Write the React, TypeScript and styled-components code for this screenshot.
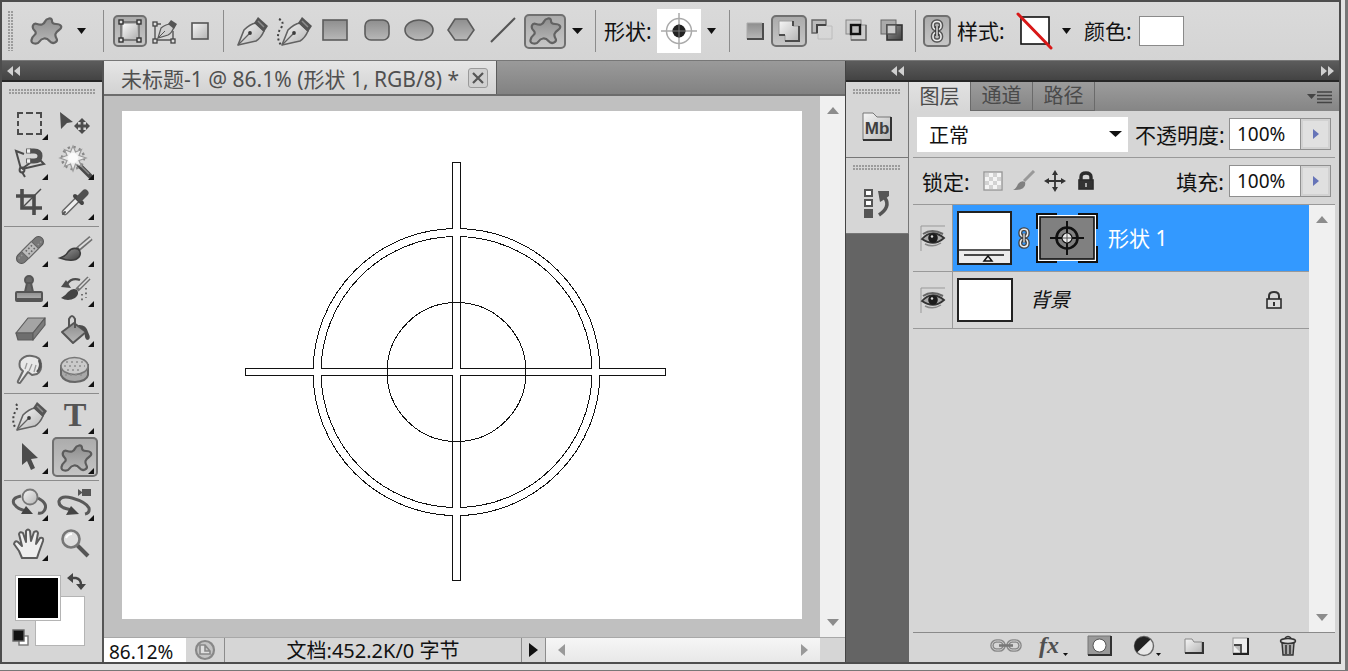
import React from "react";
import styled, { createGlobalStyle, css } from "styled-components";

const SANS = `"Noto Sans", "Noto Sans CJK SC", sans-serif`;
const INK = "#4c4c4c";
const FACE = "#d6d6d6";

const Global = createGlobalStyle`
  *, *::before, *::after { box-sizing: border-box; }
  body { margin: 0; background: ${FACE}; font-family: ${SANS}; color: #111; }
  button, input, select { font: inherit; color: inherit; margin: 0; padding: 0; border: 0; border-radius: 0; background: none; }
  svg { display: block; flex: none; }
  ul { list-style: none; margin: 0; padding: 0; }
`;

/* ---------- window frame ---------- */

const Frame = styled.div`
  display: flex;
  min-height: 100vh;
  border-right: 3px solid #777;
  border-bottom: 1px solid #777;
  background: #e2e2e2;
  padding: 0 4px 6px 0;
`;

const Window = styled.div`
  flex: 1;
  min-width: 0;
  display: flex;
  flex-direction: column;
  border: 2px solid #4d4d4d;
  background: #646464;
`;

const Workspace = styled.div`
  flex: 1;
  display: flex;
  min-height: 0;
`;

const Grip = styled.span<{ $vertical?: boolean }>`
  flex: none;
  background-image: radial-gradient(circle at 1px 1px, #9c9c9c 1px, transparent 1px);
  background-size: 3px 3px;
  ${(p) =>
    p.$vertical
      ? css`width: 6px; height: 40px; margin: 0 14px 0 6px;`
      : css`display: block; height: 6px; margin: 7px 7px 8px;`}
`;

/* ---------- options bar ---------- */

const OptionsBar = styled.header`
  display: flex;
  align-items: center;
  height: 59px;
  background: linear-gradient(#dadada, #d4d4d4);
  border-bottom: 1px solid #777;
  overflow: hidden;
`;

const OptButton = styled.button<{ $w: number; $on?: boolean }>`
  flex: none;
  display: flex;
  align-items: center;
  justify-content: center;
  width: ${(p) => p.$w}px;
  height: ${(p) => (p.$w > 40 && p.$on ? 35 : 32)}px;
  ${(p) =>
    p.$on &&
    css`
      border: 2px solid #707070;
      border-radius: 5px;
      background: linear-gradient(#ababab, #c6c6c6);
    `}
`;

const Divider = styled.span<{ $l: number; $r: number }>`
  flex: none;
  width: 1px;
  height: 42px;
  background: #8c8c8c;
  margin: 0 ${(p) => p.$r}px 0 ${(p) => p.$l}px;
`;

const OptLabel = styled.span<{ $w: number; $inset?: number }>`
  flex: none;
  width: ${(p) => p.$w}px;
  padding-left: ${(p) => p.$inset ?? 0}px;
  font-size: 21px;
  line-height: 28px;
  white-space: nowrap;
`;

const ShapeSwatch = styled.button`
  flex: none;
  width: 44px;
  height: 44px;
  background: #fff;
`;

const ColorWell = styled.button`
  flex: none;
  width: 45px;
  height: 30px;
  background: #fff;
  border: 1px solid #8a8a8a;
`;

/* ---------- tools ---------- */

const DarkHeader = styled.div<{ $end?: boolean }>`
  flex: none;
  display: flex;
  align-items: center;
  justify-content: ${(p) => (p.$end ? "flex-end" : "flex-start")};
  height: 21px;
  padding: 0 5px;
  background: linear-gradient(#5c5c5c, #434343);
  border-bottom: 2px solid #262626;
`;

const ToolPalette = styled.aside`
  flex: none;
  display: flex;
  flex-direction: column;
  width: 102px;
  border-right: 2px solid #555;
  background: ${FACE};
`;

const ToolGroup = styled.div`
  display: grid;
  grid-template-columns: 46px 46px;
  grid-auto-rows: 40px;
  margin: 0 4px;
`;

const ToolRule = styled.hr`
  width: 95px;
  height: 1px;
  border: 0;
  margin: 3px 2px;
  background: #8c8c8c;
`;

const Tool = styled.button<{ $on?: boolean }>`
  width: 46px;
  height: 40px;
  ${(p) => p.$on && css`
    border-radius: 5px;
    box-shadow: inset 0 0 0 2px #707070;
    background: linear-gradient(#ababab, #c6c6c6);
  `}
`;

const Swatches = styled.div`
  position: relative;
  height: 76px;
  margin: 7px 10px 0;
`;

const Swatch = styled.button<{ $x: number; $y: number; $size: number; $color: string }>`
  position: absolute;
  left: ${(p) => p.$x}px;
  top: ${(p) => p.$y}px;
  width: ${(p) => p.$size}px;
  height: ${(p) => p.$size}px;
  background: ${(p) => p.$color};
  border: 2px solid #fff;
  outline: 1px solid #b4b4b4;
`;

const SwatchAction = styled.button<{ $x: number; $y: number }>`
  position: absolute;
  left: ${(p) => p.$x}px;
  top: ${(p) => p.$y}px;
`;

/* ---------- document ---------- */

const Doc = styled.main`
  flex: 1;
  min-width: 0;
  display: flex;
  flex-direction: column;
  background: #c0c0c0;
  border-right: 1px solid #444;
`;

const TabStrip = styled.div`
  flex: none;
  display: flex;
  height: 35px;
  background: linear-gradient(#9a9a9a, #828282);
  border-bottom: 2px solid #6c6c6c;
`;

const DocTab = styled.div`
  display: flex;
  align-items: center;
  gap: 9px;
  padding: 0 8px 0 17px;
  background: linear-gradient(#e6e6e6, #d2d2d2);
  border-right: 1px solid #5c5c5c;
  font-size: 21px;
  color: #505050;
  white-space: nowrap;
`;

const CloseTab = styled.button`
  width: 20px;
  height: 20px;
  border: 1px solid #9a9a9a;
  border-radius: 3px;
  background: #d0d0d0;
  display: grid;
  place-items: center;
`;

const DocBody = styled.div`
  flex: 1;
  display: flex;
`;

const Pasteboard = styled.div`
  flex: 1;
  min-width: 0;
  display: flex;
  padding: 15px 18px 18px 18px;
`;

const Artboard = styled.div`
  flex: 1;
  display: flex;
  align-items: center;
  background: #fff;
  svg { width: 100%; height: 100%; flex: 1; }
`;

const VScroll = styled.div`
  flex: none;
  width: 25px;
  display: flex;
  flex-direction: column;
  justify-content: space-between;
  align-items: center;
  padding: 11px 0;
  background: #f0f0f0;
`;

const StatusBar = styled.footer`
  flex: none;
  display: flex;
  align-items: stretch;
  height: 25px;
  background: ${FACE};
  border-top: 1px solid #a8a8a8;
  font-size: 20px;
  line-height: 25px;
`;

const ZoomField = styled.input`
  width: 82px;
  padding: 3px 0 0 5px;
  background: #fff;
  font-size: 19px;
  line-height: 20px;
`;

const StatusButton = styled.button<{ $w: number }>`
  width: ${(p) => p.$w}px;
  display: grid;
  place-items: center;
  border-right: 1px solid #8c8c8c;
`;

const DocSize = styled.span`
  width: 297px;
  text-align: center;
  border-right: 1px solid #8c8c8c;
  white-space: nowrap;
`;

const HScroll = styled.div`
  flex: 1;
  display: flex;
  justify-content: space-between;
  align-items: center;
  padding: 0 12px;
  background: linear-gradient(#f6f6f6, #e8e8e8);
`;

const Corner = styled.span`
  width: 25px;
`;

/* ---------- docked icons ---------- */

const Dock = styled.aside`
  flex: none;
  display: flex;
  flex-direction: column;
  width: 63px;
`;

const DockCell = styled.div`
  height: 76px;
  background: ${FACE};
  border-bottom: 1px solid #777;
  border-right: 1px solid #777;
`;

const DockButton = styled.button`
  display: grid;
  place-items: center;
  width: 100%;
  height: 47px;
`;

/* ---------- layers panel ---------- */

const Panel = styled.section`
  flex: none;
  display: flex;
  flex-direction: column;
  width: 430px;
  background: ${FACE};
`;

const PanelTabs = styled.div`
  flex: none;
  display: flex;
  height: 29px;
  background: linear-gradient(#9c9c9c, #858585);
`;

const PanelTab = styled.button<{ $on?: boolean }>`
  width: 62px;
  border-right: 1px solid #6a6a6a;
  font-size: 20px;
  line-height: 28px;
  color: #4a4a4a;
  ${(p) => (p.$on ? css`background: linear-gradient(#e2e2e2, #d6d6d6);` : css`border-bottom: 1px solid #6a6a6a;`)}
`;

const PanelMenu = styled.button`
  margin-left: auto;
  padding-right: 6px;
`;

const PanelRow = styled.div<{ $inset?: number }>`
  flex: none;
  display: flex;
  align-items: center;
  height: 47px;
  margin: 0 4px;
  padding: 0 4px 0 ${(p) => p.$inset ?? 4}px;
  border-bottom: 1px solid #999;
  font-size: 21px;
  white-space: nowrap;
`;

const BlendSelect = styled.div`
  display: grid;
  align-items: center;
  width: 211px;
  height: 35px;
  margin-right: 7px;
  background: #fff;
  select {
    grid-area: 1 / 1;
    appearance: none;
    width: 100%;
    height: 35px;
    padding: 3px 0 0 12px;
    font-size: 20px;
  }
  svg { grid-area: 1 / 1; justify-self: end; margin-right: 6px; pointer-events: none; }
`;

const Percent = styled.div`
  display: flex;
  width: 102px;
  height: 32px;
  margin-left: auto;
  border: 1px solid #8f8f8f;
  input {
    width: 70px;
    padding-left: 7px;
    font-size: 19px;
    background: #fff;
  }
  button {
    flex: 1;
    display: grid;
    place-items: center;
    border-left: 1px solid #8f8f8f;
    background: #e0e0e0;
    box-shadow: inset 0 0 0 2px #d2d2d2;
  }
`;

const LockButton = styled.button`
  width: 31px;
  height: 28px;
  display: grid;
  place-items: center;
`;

const LockLabel = styled.span`
  width: 55px;
`;

const FillLabel = styled.label`
  margin-left: auto;
  & + ${Percent} { margin-left: 5px; }
`;

const LayersArea = styled.div`
  flex: 1;
  display: flex;
  margin: 0 4px;
  border-bottom: 1px solid #8a8a8a;
`;

const LayerList = styled.ul`
  flex: 1;
`;

const LayerRow = styled.li<{ $on?: boolean }>`
  display: flex;
  height: ${(p) => (p.$on ? 67 : 57)}px;
  border-bottom: 1px solid #999;
`;

const EyeCell = styled.button`
  width: 40px;
  display: grid;
  place-items: center;
  border-right: 1px solid #999;
  background: ${FACE};
`;

const LayerBody = styled.div<{ $on?: boolean }>`
  flex: 1;
  display: flex;
  align-items: center;
  padding: 0 26px 0 4px;
  background: ${(p) => (p.$on ? "#3399ff" : "transparent")};
`;

const LayerName = styled.span<{ $bg?: boolean }>`
  flex: 1;
  font-size: ${(p) => (p.$bg ? 20 : 21)}px;
  line-height: 28px;
  color: ${(p) => (p.$bg ? "#111" : "#fff")};
  font-style: ${(p) => (p.$bg ? "italic" : "normal")};
  margin-left: ${(p) => (p.$bg ? 17 : 9)}px;
`;

const LayerScroll = styled(VScroll)`
  width: 26px;
`;

const PanelFooter = styled.div`
  flex: none;
  display: flex;
  align-items: flex-start;
  justify-content: flex-end;
  height: 29px;
  padding-right: 28px;
`;

const FootButton = styled.button`
  width: 47px;
  height: 26px;
  display: grid;
  place-items: center;
`;

/* ---------- drawings ---------- */

type Pt = [number, number];

/* Closed curve through the midpoints of a point list */
function smooth(pts: Pt[]) {
  const mid = (a: Pt, b: Pt) => `${(a[0] + b[0]) / 2} ${(a[1] + b[1]) / 2}`;
  const n = pts.length;
  let d = `M${mid(pts[n - 1], pts[0])}`;
  pts.forEach((p, i) => {
    d += `Q${p[0]} ${p[1]} ${mid(p, pts[(i + 1) % n])}`;
  });
  return d + "Z";
}

const BLOB = smooth([
  [17, 3], [23, 2], [23, 8], [31, 8], [33, 12], [27, 16], [26, 20], [29, 25], [23, 28],
  [18, 22], [12, 23], [9, 28], [2, 27], [3, 21], [8, 17], [3, 12], [5, 7], [11, 9], [15, 8],
]);

const Defs = () => (
  <svg width="0" height="0" style={{ position: "absolute" }} aria-hidden="true">
    <defs>
      <linearGradient id="mid" x1="0" y1="0" x2="0" y2="1">
        <stop offset="0" stopColor="#8e8e8e" /><stop offset="1" stopColor="#b8b8b8" />
      </linearGradient>
      <linearGradient id="light" x1="0" y1="0" x2="1" y2="1">
        <stop offset="0" stopColor="#f6f6f6" /><stop offset="1" stopColor="#b4b4b4" />
      </linearGradient>
      <linearGradient id="dark" x1="0" y1="0" x2="1" y2="1">
        <stop offset="0" stopColor="#9a9a9a" /><stop offset="1" stopColor="#404040" />
      </linearGradient>
    </defs>
  </svg>
);

const Down = ({ w = 11, c = "#111" }: { w?: number; c?: string }) => (
  <svg width={w} height="6" viewBox="0 0 11 6" preserveAspectRatio="none"><path d="M0 0H11L5.5 6Z" fill={c} /></svg>
);
const Up = () => <svg width="12" height="7" viewBox="0 0 12 7"><path d="M0 7H12L6 0Z" fill="#8c8c8c" /></svg>;
const DownGrey = () => <svg width="12" height="7" viewBox="0 0 12 7"><path d="M0 0H12L6 7Z" fill="#8c8c8c" /></svg>;
const Left = () => <svg width="7" height="12" viewBox="0 0 7 12"><path d="M7 0V12L0 6Z" fill="#999" /></svg>;
const Right = ({ c = "#999" }: { c?: string }) => (
  <svg width="7" height="12" viewBox="0 0 7 12"><path d="M0 0V12L7 6Z" fill={c} /></svg>
);
const SliderArrow = () => (
  <svg width="6" height="10" viewBox="0 0 6 10"><path d="M0 0V10L6 5Z" fill="#6674b8" /></svg>
);
const Collapse = ({ flip }: { flip?: boolean }) => (
  <svg width="13" height="10" viewBox="0 0 13 10">
    <path d={flip ? "M0 0V10L6 5ZM7 0V10L13 5Z" : "M6 0V10L0 5ZM13 0V10L7 5Z"} fill="#d0d0d0" />
  </svg>
);

const Blob = () => (
  <svg width="34" height="30" viewBox="0 0 34 30"><path d={BLOB} fill="url(#mid)" stroke="#626262" strokeWidth="2.2" /></svg>
);

const PenShape = () => (
  <g strokeLinejoin="round">
    <path d="M2 29L8 14Q14 8 20 7L28 15Q25 22 20 25Z" fill="url(#light)" stroke="#626262" strokeWidth="1.6" />
    <path d="M2 29L13 18" stroke="#626262" strokeWidth="1.2" />
    <circle cx="14" cy="17" r="1.9" fill="#3c3c3c" />
    <path d="M22 1L32 10L28 16L18 7Z" fill="#555" />
    <path d="M22 5L28 11" stroke="#8d8d8d" strokeWidth="1.5" />
  </g>
);
const Pen = () => <svg width="33" height="31" viewBox="0 0 33 31"><PenShape /></svg>;
const FreePen = () => (
  <svg width="37" height="31" viewBox="0 0 37 31">
    <path d="M3 3Q9 6 5 12Q-1 20 5 29" fill="none" stroke="#444" strokeWidth="2" strokeDasharray="2 2.4" />
    <g transform="translate(4 0)"><PenShape /></g>
  </svg>
);

const ShapeLayer = () => (
  <svg width="24" height="24" viewBox="0 0 24 24">
    <path d="M3 3H21V21H3Z" fill="none" stroke="#666" strokeWidth="1.4" />
    <rect x="5" y="5" width="14" height="14" fill="url(#light)" />
    {[[3, 3], [21, 3], [3, 21], [21, 21]].map(([x, y]) => (
      <rect key={`${x}-${y}`} x={x - 2} y={y - 2} width="4" height="4" fill="#ddd" stroke="#333" strokeWidth="1.4" />
    ))}
  </svg>
);
const PathMode = () => (
  <svg width="25" height="25" viewBox="0 0 25 25">
    <path d="M3 6V21H21V12M3 5H9" fill="none" stroke="#555" strokeWidth="1.4" />
    {[[3, 5], [3, 22], [21, 22]].map(([x, y]) => (
      <rect key={`${x}-${y}`} x={x - 2} y={y - 2} width="4" height="4" fill="#ddd" stroke="#444" strokeWidth="1.3" />
    ))}
    <path d="M6 19L9 9Q14 5 19 5L22 8Q20 14 16 16Z" fill="#cfcfcf" stroke="#5a5a5a" strokeWidth="1.2" />
    <path d="M6 19L13 12" stroke="#555" />
    <path d="M19 1L25 5L22 10L16 5Z" fill="#555" />
  </svg>
);
const FillPixels = () => (
  <svg width="19" height="19" viewBox="0 0 19 19"><rect x="1" y="1" width="16" height="16" fill="url(#light)" stroke="#555" strokeWidth="1.6" /></svg>
);

const Prim = ({ kind }: { kind: "rect" | "round" | "ellipse" | "hex" | "line" }) => {
  const s = { fill: "url(#mid)", stroke: "#5c5c5c", strokeWidth: 1.6 };
  return (
    <svg width="30" height="28" viewBox="0 0 30 28">
      {kind === "rect" && <rect x="3" y="3" width="24" height="20" {...s} />}
      {kind === "round" && <rect x="3" y="3" width="24" height="20" rx="6" {...s} />}
      {kind === "ellipse" && <ellipse cx="15" cy="13" rx="14" ry="10" {...s} />}
      {kind === "hex" && <path d="M9 2H21L28 13L21 23H9L2 13Z" {...s} />}
      {kind === "line" && <path d="M3 25L27 1" stroke="#555" strokeWidth="2" />}
    </svg>
  );
};

const MiniTarget = () => (
  <svg width="44" height="44" viewBox="0 0 44 44">
    <circle cx="22" cy="22" r="12.5" fill="none" stroke="#aaa" strokeWidth="1.5" />
    <path d="M22 4V40M4 22H40" stroke="#aaa" strokeWidth="1.5" />
    <circle cx="22" cy="22" r="6.5" fill="#222" />
    <path d="M22 15V29M15 22H29" stroke="#777" />
  </svg>
);

const Combine = ({ kind }: { kind: "new" | "add" | "sub" | "int" | "xor" }) => (
  <svg width="26" height="24" viewBox="0 0 26 24">
    {kind === "new" && (
      <g><rect x="4" y="4" width="16" height="16" fill="url(#mid)" /><path d="M4 20V4H19" fill="none" stroke="#aaa" /><path d="M20 4V20H4" fill="none" stroke="#4c4c4c" strokeWidth="2" /></g>
    )}
    {kind === "add" && (
      <g><path d="M3 2H17V7H23V22H9V16H3Z" fill="url(#light)" stroke="#9a9a9a" /><path d="M17 2V7M23 7V22H9M3 16H9" fill="none" stroke="#4c4c4c" strokeWidth="2" /></g>
    )}
    {kind === "sub" && (
      <g><path d="M3 1H17V6H8V14H3Z" fill="#bbb" stroke="#666" strokeWidth="1.4" /><path d="M17 6H8V14" fill="none" stroke="#444" strokeWidth="2" /><path d="M18 7H23V20H9V15" fill="none" stroke="#bcbcbc" /></g>
    )}
    {kind === "int" && (
      <g><rect x="2" y="1" width="15" height="14" fill="#ccc" stroke="#888" /><rect x="7" y="6" width="15" height="15" fill="#ccc" stroke="#888" /><path d="M22 6V21H7" fill="none" stroke="#666" strokeWidth="1.4" /><rect x="7" y="6" width="9" height="9" fill="#bbb" stroke="#111" strokeWidth="2.4" /></g>
    )}
    {kind === "xor" && (
      <g><rect x="2" y="1" width="15" height="14" fill="#aaa" stroke="#666" /><rect x="8" y="6" width="15" height="15" fill="url(#dark)" stroke="#333" strokeWidth="1.6" /><rect x="8" y="6" width="9" height="9" fill="#ccc" stroke="#555" strokeWidth="1.4" /></g>
    )}
  </svg>
);

const ChainV = ({ c = "#555", w = 14, h = 24 }: { c?: string; w?: number; h?: number }) => (
  <svg width={w} height={h} viewBox="0 0 14 24">
    <g fill="none" stroke={c} strokeWidth="4.5"><rect x="3" y="2.5" width="8" height="8" rx="3.5" /><rect x="3" y="13.5" width="8" height="8" rx="3.5" /></g>
    <g fill="none" stroke="#eee" strokeWidth="1.6"><rect x="3" y="2.5" width="8" height="8" rx="3.5" /><rect x="3" y="13.5" width="8" height="8" rx="3.5" /></g>
    <path d="M7 7V17" stroke="#333" strokeWidth="3.6" /><path d="M7 7V17" stroke="#eee" strokeWidth="1.4" />
  </svg>
);

const NoStyle = () => (
  <svg width="38" height="38" viewBox="0 0 38 38">
    <rect x="5" y="5" width="28" height="27" fill="#fff" stroke="#111" strokeWidth="1.6" />
    <path d="M2 2L35 36" stroke="#d81818" strokeWidth="3" strokeLinecap="round" />
  </svg>
);

const TOOL_ART: Record<string, React.ReactNode> = {
  marquee: (
    <path d="M17 10H12V15M20 10H27M30 10H35V15M35 18V23M35 26V31H30M27 31H20M17 31H12V26M12 23V18" fill="none" stroke={INK} strokeWidth="2" />
  ),
  move: (
    <g fill={INK}>
      <path d="M8 9L21 19L15 20L9 26Z" />
      <path d="M30 15L34 19H31.4V21.6H34V19L38 23L34 27V24.4H31.4V27H34L30 31L26 27H28.6V24.4H26V27L22 23L26 19V21.600H28.6V19H26Z" />
    </g>
  ),
  lasso: (
    <g fill="none" stroke={INK} strokeWidth="2">
      <path d="M18 11L10 8L15 26M16 26L38 21L33 16" />
      <circle cx="16" cy="27" r="2.4" />
      <path d="M16 29L19 34M17 25L24 20" />
      <path d="M24 8H28Q34 8 34 13Q34 18 28 18H24" stroke="#505050" strokeWidth="5" />
      <path d="M20 8H25M20 18H25" stroke="#666" strokeWidth="5" />
      <path d="M21 8H24M21 18H24" stroke="#f2f2f2" strokeWidth="3.4" />
    </g>
  ),
  wand: (
    <g>
      <path d="M26 21L40 35" stroke="#4a4a4a" strokeWidth="5" />
      <path d="M28 22L37 31" stroke="#888" strokeWidth="1.5" />
      <circle cx="21" cy="15" r="11" fill="none" stroke="#888" strokeWidth="2.4" strokeDasharray="2.4 3.36" />
      <path d="M21 3L23.5 9L29.5 6.500L27 12.500L34 15L27 17.500L29.500 23.500L23.500 21L21 28L18.500 21L12.500 23.500L15 17.500L8 15L15 12.500L12.500 6.500L18.500 9Z" fill="#ececec" stroke="#999" strokeWidth="1.2" />
      <circle cx="21" cy="15" r="5" fill="#fafafa" />
    </g>
  ),
  crop: (
    <g fill="none" stroke={INK} strokeWidth="3.6">
      <path d="M16 6V25H36M10 13H28V32" />
      <path d="M35 6L17 24" strokeWidth="1.4" />
    </g>
  ),
  dropper: (
    <g strokeLinecap="round">
      <path d="M13 29L26 16" stroke="#666" strokeWidth="6.5" />
      <path d="M13 29L26 16" stroke="#eee" strokeWidth="3.6" />
      <path d="M11 31L13 29" stroke="#555" strokeWidth="2" />
      <path d="M23 13L30 20" stroke="#444" strokeWidth="4" />
      <path d="M28 15L33 10" stroke="#505050" strokeWidth="7" />
    </g>
  ),
  heal: (
    <g transform="rotate(-45 24 20)">
      <rect x="7" y="15" width="34" height="10" rx="5" fill="#777" stroke="#555" />
      <rect x="17" y="15" width="14" height="10" fill="#bcbcbc" stroke="#666" />
      <path d="M20 18H29M20 22H29" stroke="#666" strokeWidth="1.6" strokeDasharray="1.6 2" />
      <path d="M10 18H15M33 22H38" stroke="#999" strokeWidth="1.4" strokeDasharray="1.5 2" />
    </g>
  ),
  brush: (
    <g>
      <path d="M25 20L39 8" stroke="#707070" strokeWidth="5" /><path d="M27 18L39 8" stroke="#ddd" strokeWidth="2" />
      <path d="M8 28Q14 26 16 22Q20 17 26 19Q30 22 27 27Q22 33 8 28Z" fill="url(#dark)" stroke="#3d3d3d" strokeWidth="1.6" />
    </g>
  ),
  stamp: (
    <g fill="url(#mid)" stroke="#555" strokeWidth="2">
      <circle cx="23" cy="10" r="4" fill="#666" /><path d="M21 13L19 22H27L25 13Z" fill="#666" />
      <rect x="10" y="22" width="26" height="9" rx="1" /><path d="M11 29H35" />
    </g>
  ),
  history: (
    <g>
      <path d="M25 20L37 8" stroke="#707070" strokeWidth="4.5" /><path d="M27 18L37 8" stroke="#ddd" strokeWidth="1.6" />
      <path d="M9 28Q14 25 16 22Q21 17 25 20Q28 24 23 28Q16 32 9 28Z" fill="#444" />
      <path d="M28 10Q20 7 15 14" fill="none" stroke={INK} strokeWidth="2.4" /><path d="M9 17L14 10L19 18Z" fill={INK} />
      <path d="M34 18V28M30 24V32" stroke="#555" strokeWidth="1.6" strokeDasharray="1.6 3" />
    </g>
  ),
  eraser: (
    <g stroke="#5c5c5c" strokeWidth="1.2" strokeLinejoin="round">
      <path d="M10 23L22 8H39L27 23Z" fill="#a4a4a4" /><path d="M10 23H27V30H12Z" fill="#6e6e6e" /><path d="M27 23L39 8V15L27 30Z" fill="#7c7c7c" />
    </g>
  ),
  bucket: (
    <g>
      <path d="M10 22L22 13L34 22L21 33Z" fill="url(#mid)" stroke="#555" strokeWidth="2" strokeLinejoin="round" />
      <path d="M17 17V9Q20 3 23 9V18" fill="none" stroke="#555" strokeWidth="2" />
      <path d="M26 15Q34 14 36 22Q40 30 35 30Q32 28 33 22Z" fill={INK} />
    </g>
  ),
  smudge: (
    <g>
      <path d="M12 31L17 21Q12 18 14 11Q18 5 26 6Q35 7 35 14Q36 21 31 24L26 25L22 22L14 33Q11 33 12 31Z" fill="#e8e8e8" stroke="#6a6a6a" strokeWidth="2" strokeLinejoin="round" />
      <path d="M21 13L19 19M26 14L23 21M30 15L28 22" stroke="#999" strokeWidth="1.3" />
      <path d="M33 10Q36 17 31 22" fill="none" stroke="#555" strokeWidth="2.4" />
    </g>
  ),
  sponge: (
    <g>
      <path d="M9 15V25Q12 32 23 32Q35 31 36 25V14" fill="#a8a8a8" stroke="#666" strokeWidth="2" />
      <ellipse cx="22.500" cy="16" rx="13.500" ry="8.500" fill="#cacaca" stroke="#777" strokeWidth="1.6" />
      <path d="M14 12H32M12 16H33M15 20H30M13 25H33" stroke="#8f8f8f" strokeWidth="1.6" strokeDasharray="2 3" />
    </g>
  ),
  pen: (
    <g>
      <path d="M10 7Q13 10 9 15Q5 24 10 32" fill="none" stroke="#444" strokeWidth="2" strokeDasharray="2 2.4" />
      <g transform="translate(9 4)"><PenShape /></g>
    </g>
  ),
  type: <text x="23" y="29" textAnchor="middle" fontFamily="Liberation Serif, serif" fontWeight="700" fontSize="34" fill="#555">T</text>,
  select: <path d="M16 6L32 21L25 22L29 31L25 33L21 24L16 28Z" fill={INK} />,
  shape: <g transform="translate(7 6)"><path d={BLOB} fill="url(#mid)" stroke="#5c5c5c" strokeWidth="2.2" /></g>,
  rotate3d: (
    <g>
      <path d="M15 12Q5 14 8 20Q12 26 22 27M32 14Q43 20 38 27Q36 30 32 29" fill="none" stroke="#5a5a5a" strokeWidth="3" />
      <circle cx="24" cy="13" r="7.500" fill="url(#light)" stroke="#777" strokeWidth="1.8" />
      <path d="M27 30L15 30L20 22Z" fill="#444" />
    </g>
  ),
  orbit: (
    <g>
      <path d="M20 26Q6 24 7 17Q9 11 20 14Q34 18 37 24Q38 29 33 30" fill="none" stroke="#5a5a5a" strokeWidth="3" />
      <path d="M27 30L14 31L19 22Z" fill="#444" />
      <path d="M26 5L30 8V5H39V12H30V9L26 12Z" fill="#555" />
    </g>
  ),
  hand: (
    <path d="M16 34L13 27L8 20Q9 16 12 18L16 22L13 10Q14 7 17 9L20 18V7Q22 4 24 7L25 17L28 8Q31 6 32 9L30 20L34 14Q38 13 37 17L33 28L31 34Z"
      fill="#eee" stroke="#5c5c5c" strokeWidth="2" strokeLinejoin="round" />
  ),
  zoom: (
    <g>
      <path d="M25 21L36 32" stroke="#555" strokeWidth="4" />
      <circle cx="19" cy="15" r="8.500" fill="#dedede" stroke="#777" strokeWidth="2.6" />
      <path d="M14 14Q16 10 20 10" stroke="#fff" strokeWidth="2" fill="none" />
    </g>
  ),
};

const ToolArt = ({ id, more = true }: { id: string; more?: boolean }) => (
  <svg width="46" height="40" viewBox="0 0 46 40">
    {TOOL_ART[id]}
    {more && <path d="M42 31V37H36Z" fill="#111" />}
  </svg>
);

const TOOL_GROUPS: { id: string; label: string; single?: boolean }[][] = [
  [
    { id: "marquee", label: "矩形选框" }, { id: "move", label: "移动", single: true },
    { id: "lasso", label: "磁性套索" }, { id: "wand", label: "魔棒" },
    { id: "crop", label: "裁剪" }, { id: "dropper", label: "吸管" },
  ],
  [
    { id: "heal", label: "修复画笔" }, { id: "brush", label: "画笔" },
    { id: "stamp", label: "仿制图章" }, { id: "history", label: "历史画笔" },
    { id: "eraser", label: "橡皮擦" }, { id: "bucket", label: "油漆桶" },
    { id: "smudge", label: "涂抹" }, { id: "sponge", label: "海绵" },
  ],
  [
    { id: "pen", label: "自由钢笔" }, { id: "type", label: "文字" },
    { id: "select", label: "路径选择" }, { id: "shape", label: "自定形状" },
  ],
  [
    { id: "rotate3d", label: "3D 旋转" }, { id: "orbit", label: "3D 环绕" },
    { id: "hand", label: "抓手" }, { id: "zoom", label: "缩放", single: true },
  ],
];

/* Union outline: a dark pass, then a slightly thinner white pass over it */
const Crosshair = () => {
  const pass = (color: string, d: number) => (
    <g fill="none" stroke={color}>
      <circle cx="334.5" cy="261" r="139.5" strokeWidth={9 - d} />
      <path d={`M334.5 ${51 + d / 2}V${470 - d / 2}`} strokeWidth={9 - d} />
      <path d={`M${123 + d / 2} 261H${544 - d / 2}`} strokeWidth={8 - d} />
    </g>
  );
  return (
    <svg viewBox="0 0 680 508" shapeRendering="crispEdges" role="img" aria-label="形状 1">
      {pass("#111", 0)}
      {pass("#fff", 2)}
      <circle cx="334.5" cy="261" r="69.5" fill="none" stroke="#111" />
    </svg>
  );
};

const MbIcon = () => (
  <svg width="32" height="32" viewBox="0 0 32 32">
    <path d="M2 29V2H12L16 6H30V29Z" fill="url(#light)" stroke="#777" />
    <path d="M30 6V29H2" fill="none" stroke="#333" strokeWidth="2" />
    <text x="16" y="23" textAnchor="middle" fontFamily="Liberation Sans, sans-serif" fontWeight="700" fontSize="17" fill="#3f3f3f">Mb</text>
  </svg>
);
const HistoryPanelIcon = () => (
  <svg width="30" height="32" viewBox="0 0 30 32">
    <rect x="3" y="3" width="7" height="6" fill="#fff" stroke="#555" strokeWidth="2" />
    <rect x="3" y="13" width="7" height="6" fill="#fff" stroke="#555" strokeWidth="2" />
    <rect x="2" y="22" width="9" height="9" fill="#555" />
    <path d="M17 28Q29 20 23 11" fill="none" stroke="#555" strokeWidth="3.5" />
    <path d="M16 4H27V9L23 12L18 15Z" fill="#555" />
  </svg>
);

const Eye = () => (
  <svg width="26" height="26" viewBox="0 0 26 26">
    <path d="M1 26V1H25" fill="none" stroke="#999" />
    <path d="M2 14Q12 3 24 13Q14 22 2 14Z" fill="#aaa" stroke="#333" strokeWidth="1.8" />
    <path d="M3 9Q12 3 23 9" fill="none" stroke="#666" strokeWidth="2" />
    <path d="M5 19Q13 23 21 18" fill="none" stroke="#888" strokeWidth="1.4" />
    <circle cx="13" cy="13" r="4.8" fill="#1c1c1c" /><circle cx="12" cy="11.500" r="1.2" fill="#ddd" />
  </svg>
);

const FillThumb = () => (
  <svg width="56" height="56" viewBox="0 0 56 56">
    <rect x="1" y="2" width="53" height="52" fill="#fff" stroke="#222" strokeWidth="2" />
    <path d="M1 40H54" stroke="#222" strokeWidth="1.6" />
    <rect x="2" y="41" width="51" height="12" fill="#ececec" />
    <path d="M7 45H47" stroke="#111" strokeWidth="1.6" />
    <path d="M31 46L35 51H27Z" fill="none" stroke="#111" strokeWidth="1.5" />
  </svg>
);
const MaskThumb = () => (
  <svg width="64" height="52" viewBox="0 0 64 52">
    <rect x="2" y="2" width="60" height="48" fill="none" stroke="#111" strokeWidth="2" />
    <path d="M22 2H43M22 50H43M2 17V34M62 17V34" stroke="#3399ff" strokeWidth="2.4" />
    <rect x="3" y="3" width="58" height="46" fill="#fff" />
    <rect x="5" y="5" width="54" height="42" fill="#808080" stroke="#111" strokeWidth="1.6" />
    <g fill="none" stroke="#111"><circle cx="32" cy="26" r="10.500" strokeWidth="2.6" /><path d="M32 9V43M15 26H49" strokeWidth="2" /></g>
    <circle cx="32" cy="26" r="5" fill="#eee" stroke="#111" strokeWidth="1.2" /><path d="M32 21V31M27 26H37" stroke="#555" />
  </svg>
);
const PlainThumb = () => (
  <svg width="56" height="44" viewBox="0 0 56 44"><rect x="1" y="1" width="54" height="42" fill="#fff" stroke="#222" strokeWidth="2" /></svg>
);
const Padlock = ({ dark }: { dark?: boolean }) => (
  <svg width="18" height="20" viewBox="0 0 18 20">
    <path d="M4 9V6Q4 2 9 2Q14 2 14 6V9" fill="none" stroke={dark ? "#2c2c2c" : "#333"} strokeWidth={dark ? 3.4 : 2} />
    <rect x="2" y="9" width="14" height="9" fill={dark ? "#333" : "#ddd"} stroke="#2c2c2c" strokeWidth="1.6" />
    <path d="M9 12V16" stroke={dark ? "#aaa" : "#333"} strokeWidth="2" />
  </svg>
);
const LockPixels = () => (
  <svg width="20" height="20" viewBox="0 0 20 20">
    <rect x="1" y="1" width="18" height="18" fill="#f4f4f4" stroke="#999" strokeWidth="1.4" />
    <path d="M2 2h4v4H2zM10 2h4v4h-4zM6 6h4v4H6zM14 6h4v4h-4zM2 10h4v4H2zM10 10h4v4h-4zM6 14h4v4H6zM14 14h4v4h-4z" fill="#d2d2d2" />
  </svg>
);
const LockBrush = () => (
  <svg width="24" height="22" viewBox="0 0 24 22">
    <path d="M12 11L22 1" stroke="#999" strokeWidth="3" /><path d="M1 20Q4 19 6 14Q9 10 13 12Q15 20 1 20Z" fill="#808080" />
  </svg>
);
const LockMove = () => (
  <svg width="22" height="22" viewBox="0 0 22 22">
    <path d="M11 2V20M2 11H20" stroke="#333" strokeWidth="1.8" />
    <path d="M11 0L14 5H8ZM11 22L14 17H8ZM0 11L5 8V14ZM22 11L17 8V14Z" fill="#333" />
  </svg>
);

const LinkH = () => (
  <svg width="34" height="16" viewBox="0 0 34 16">
    <g fill="none" stroke="#888" strokeWidth="3.6"><rect x="3" y="3" width="12" height="9" rx="4.5" /><rect x="19" y="3" width="12" height="9" rx="4.5" /></g>
    <g fill="none" stroke="#d0d0d0" strokeWidth="1"><rect x="3" y="3" width="12" height="9" rx="4.5" /><rect x="19" y="3" width="12" height="9" rx="4.5" /></g>
    <path d="M10 7.500H24" stroke="#777" strokeWidth="2.6" />
  </svg>
);
const Fx = () => (
  <svg width="34" height="26" viewBox="0 0 34 26">
    <text x="3" y="20" fontFamily="Liberation Serif, serif" fontStyle="italic" fontWeight="700" fontSize="24" fill="#505050">fx</text>
    <path d="M27 20H32L29.500 23Z" fill="#111" />
  </svg>
);
const MaskIcon = () => (
  <svg width="26" height="22" viewBox="0 0 26 22">
    <rect x="1" y="1" width="23" height="19" fill="#999" /><path d="M1 20V1H24" fill="none" stroke="#777" /><path d="M24 1V20H1" fill="none" stroke="#333" strokeWidth="2" />
    <circle cx="12.500" cy="10.500" r="6.500" fill="#fff" stroke="#555" />
  </svg>
);
const Adjust = () => (
  <svg width="30" height="24" viewBox="0 0 30 24">
    <circle cx="12" cy="12" r="9.500" fill="#e8e8e8" stroke="#666" strokeWidth="1.4" />
    <path d="M5 18.500A9 9 0 0 1 18.500 5.500Z" fill="#222" /><path d="M24 19H29L26.500 22Z" fill="#111" />
  </svg>
);
const Folder = () => (
  <svg width="22" height="18" viewBox="0 0 22 18">
    <path d="M2 16V2H9L11 5H19V16Z" fill="url(#light)" stroke="#888" /><path d="M20 5V16H2" fill="none" stroke="#333" strokeWidth="2" />
  </svg>
);
const NewLayer = () => (
  <svg width="20" height="20" viewBox="0 0 20 20">
    <rect x="2" y="2" width="15" height="15" fill="#eee" stroke="#999" /><path d="M17 2V18H2" fill="none" stroke="#222" strokeWidth="2" />
    <path d="M3 9H10V17" fill="none" stroke="#444" strokeWidth="1.8" /><path d="M3 10L9 16V10Z" fill="#bbb" />
  </svg>
);
const Trash = () => (
  <svg width="18" height="22" viewBox="0 0 18 22">
    <path d="M3 8H15L14 20H4Z" fill="#aaa" stroke="#333" strokeWidth="1.4" /><path d="M7 10V19M11 10V19" stroke="#333" strokeWidth="1.6" />
    <ellipse cx="9" cy="6" rx="7.500" ry="2.500" fill="#ddd" stroke="#333" strokeWidth="1.5" /><path d="M6 3Q9 0 12 3" fill="none" stroke="#333" strokeWidth="1.6" />
  </svg>
);
const Clock = () => (
  <svg width="22" height="22" viewBox="0 0 22 22">
    <circle cx="11" cy="11" r="9" fill="#c4c4c4" stroke="#888" strokeWidth="2.2" /><path d="M6 15V6H11L16 12V15ZM11 6V12H16" fill="#e0e0e0" stroke="#888" strokeWidth="1.6" />
  </svg>
);

/* ---------- page ---------- */

export default function App() {
  return (
    <>
      <Global />
      <Defs />
      <Frame>
        <Window>
          <OptionsBar>
            <Grip $vertical />
            <OptButton $w={36} aria-label="当前工具"><Blob /></OptButton>
            <OptButton $w={34} aria-label="工具预设"><Down w={9} /></OptButton>
            <Divider $l={5} $r={9} />
            <OptButton $w={34} $on aria-label="形状图层"><ShapeLayer /></OptButton>
            <OptButton $w={34} aria-label="路径"><PathMode /></OptButton>
            <OptButton $w={38} aria-label="填充像素"><FillPixels /></OptButton>
            <Divider $l={4} $r={6} />
            <OptButton $w={44} aria-label="钢笔"><Pen /></OptButton>
            <OptButton $w={40} aria-label="自由钢笔"><FreePen /></OptButton>
            <OptButton $w={42} aria-label="矩形"><Prim kind="rect" /></OptButton>
            <OptButton $w={42} aria-label="圆角矩形"><Prim kind="round" /></OptButton>
            <OptButton $w={42} aria-label="椭圆"><Prim kind="ellipse" /></OptButton>
            <OptButton $w={42} aria-label="多边形"><Prim kind="hex" /></OptButton>
            <OptButton $w={42} aria-label="直线"><Prim kind="line" /></OptButton>
            <OptButton $w={42} $on aria-label="自定形状"><Blob /></OptButton>
            <OptButton $w={22} aria-label="几何选项"><Down /></OptButton>
            <Divider $l={7} $r={8} />
            <OptLabel $w={53}>形状:</OptLabel>
            <ShapeSwatch aria-label="形状"><MiniTarget /></ShapeSwatch>
            <OptButton $w={20} aria-label="选择形状"><Down w={9} /></OptButton>
            <Divider $l={8} $r={11} />
            <OptButton $w={30} aria-label="新建形状图层"><Combine kind="new" /></OptButton>
            <OptButton $w={36} $on aria-label="添加到形状区域"><Combine kind="add" /></OptButton>
            <OptButton $w={30} aria-label="从形状区域减去"><Combine kind="sub" /></OptButton>
            <OptButton $w={40} aria-label="交叉形状区域"><Combine kind="int" /></OptButton>
            <OptButton $w={30} aria-label="重叠形状区域除外"><Combine kind="xor" /></OptButton>
            <Divider $l={8} $r={7} />
            <OptButton $w={28} $on aria-label="链接样式"><ChainV /></OptButton>
            <OptLabel $w={60} $inset={6}>样式:</OptLabel>
            <OptButton $w={48} aria-label="样式"><NoStyle /></OptButton>
            <OptButton $w={14} aria-label="选择样式"><Down w={9} /></OptButton>
            <OptLabel $w={66} $inset={11}>颜色:</OptLabel>
            <ColorWell aria-label="颜色" />
          </OptionsBar>

          <Workspace>
            <ToolPalette>
              <DarkHeader><Collapse /></DarkHeader>
              <Grip />
              {TOOL_GROUPS.map((group, i) => (
                <React.Fragment key={group[0].id}>
                  {i > 0 && <ToolRule />}
                  <ToolGroup>
                    {group.map((t) => (
                      <Tool key={t.id} $on={t.id === "shape"} aria-label={t.label}>
                        <ToolArt id={t.id} more={!t.single} />
                      </Tool>
                    ))}
                  </ToolGroup>
                </React.Fragment>
              ))}
              <Swatches>
                <Swatch $x={24} $y={26} $size={48} $color="#fff" aria-label="背景色" />
                <Swatch $x={4} $y={5} $size={44} $color="#000" aria-label="前景色" />
                <SwatchAction $x={54} $y={1} aria-label="切换颜色">
                  <svg width="22" height="20" viewBox="0 0 22 20">
                    <path d="M5 6H10Q15 7 15 13" fill="none" stroke="#444" strokeWidth="2.4" />
                    <path d="M1 6L7 1V11ZM15 18L10 12H20Z" fill="#444" />
                  </svg>
                </SwatchAction>
                <SwatchAction $x={0} $y={58} aria-label="默认颜色">
                  <svg width="18" height="18" viewBox="0 0 18 18">
                    <rect x="7" y="7" width="9" height="9" fill="#fff" stroke="#777" strokeWidth="1.4" />
                    <rect x="1" y="1" width="11" height="11" fill="#111" stroke="#666" strokeWidth="1.4" />
                  </svg>
                </SwatchAction>
              </Swatches>
            </ToolPalette>

            <Doc>
              <TabStrip>
                <DocTab>
                  <span>未标题-1 @ 86.1% (形状 1, RGB/8) *</span>
                  <CloseTab aria-label="关闭">
                    <svg width="12" height="12" viewBox="0 0 12 12"><path d="M1 1L11 11M11 1L1 11" stroke="#555" strokeWidth="2.2" /></svg>
                  </CloseTab>
                </DocTab>
              </TabStrip>
              <DocBody>
                <Pasteboard><Artboard><Crosshair /></Artboard></Pasteboard>
                <VScroll><Up /><DownGrey /></VScroll>
              </DocBody>
              <StatusBar>
                <ZoomField aria-label="缩放比例" defaultValue="86.12%" />
                <StatusButton $w={39} aria-label="版本"><Clock /></StatusButton>
                <DocSize>文档:452.2K/0 字节</DocSize>
                <StatusButton $w={24} aria-label="状态选项">
                  <svg width="9" height="14" viewBox="0 0 9 14"><path d="M0 0V14L9 7Z" fill="#111" /></svg>
                </StatusButton>
                <HScroll><Left /><Right /></HScroll>
                <Corner />
              </StatusBar>
            </Doc>

            <Dock>
              <DarkHeader $end><Collapse /></DarkHeader>
              <DockCell><Grip /><DockButton aria-label="Mini Bridge"><MbIcon /></DockButton></DockCell>
              <DockCell><Grip /><DockButton aria-label="历史记录"><HistoryPanelIcon /></DockButton></DockCell>
            </Dock>

            <Panel>
              <DarkHeader $end><Collapse flip /></DarkHeader>
              <PanelTabs>
                <PanelTab $on>图层</PanelTab>
                <PanelTab>通道</PanelTab>
                <PanelTab>路径</PanelTab>
                <PanelMenu aria-label="面板菜单">
                  <svg width="26" height="14" viewBox="0 0 26 14">
                    <path d="M0 4H9L4.500 9Z" fill="#444" /><path d="M10 2H25M10 5.500H25M10 9H25M10 12.500H25" stroke="#444" strokeWidth="1.3" />
                  </svg>
                </PanelMenu>
              </PanelTabs>
              <PanelRow>
                <BlendSelect>
                  <select aria-label="混合模式" defaultValue="normal"><option value="normal">正常</option></select>
                  <Down w={13} />
                </BlendSelect>
                <label htmlFor="opacity">不透明度:</label>
                <Percent><input id="opacity" defaultValue="100%" /><button aria-label="不透明度滑块"><SliderArrow /></button></Percent>
              </PanelRow>
              <PanelRow $inset={9}>
                <LockLabel>锁定:</LockLabel>
                <LockButton aria-label="锁定透明像素"><LockPixels /></LockButton>
                <LockButton aria-label="锁定图像像素"><LockBrush /></LockButton>
                <LockButton aria-label="锁定位置"><LockMove /></LockButton>
                <LockButton aria-label="锁定全部"><Padlock dark /></LockButton>
                <FillLabel htmlFor="fill">填充:</FillLabel>
                <Percent><input id="fill" defaultValue="100%" /><button aria-label="填充滑块"><SliderArrow /></button></Percent>
              </PanelRow>
              <LayersArea>
                <LayerList>
                  <LayerRow $on>
                    <EyeCell aria-label="形状 1 可见性"><Eye /></EyeCell>
                    <LayerBody $on>
                      <FillThumb />
                      <ChainV c="#444" w={22} h={22} />
                      <MaskThumb />
                      <LayerName>形状 1</LayerName>
                    </LayerBody>
                  </LayerRow>
                  <LayerRow>
                    <EyeCell aria-label="背景 可见性"><Eye /></EyeCell>
                    <LayerBody>
                      <PlainThumb />
                      <LayerName $bg>背景</LayerName>
                      <Padlock />
                    </LayerBody>
                  </LayerRow>
                </LayerList>
                <LayerScroll><Up /><DownGrey /></LayerScroll>
              </LayersArea>
              <PanelFooter>
                <FootButton aria-label="链接图层"><LinkH /></FootButton>
                <FootButton aria-label="图层样式"><Fx /></FootButton>
                <FootButton aria-label="添加蒙版"><MaskIcon /></FootButton>
                <FootButton aria-label="调整图层"><Adjust /></FootButton>
                <FootButton aria-label="新建组"><Folder /></FootButton>
                <FootButton aria-label="新建图层"><NewLayer /></FootButton>
                <FootButton aria-label="删除图层"><Trash /></FootButton>
              </PanelFooter>
            </Panel>
          </Workspace>
        </Window>
      </Frame>
    </>
  );
}
